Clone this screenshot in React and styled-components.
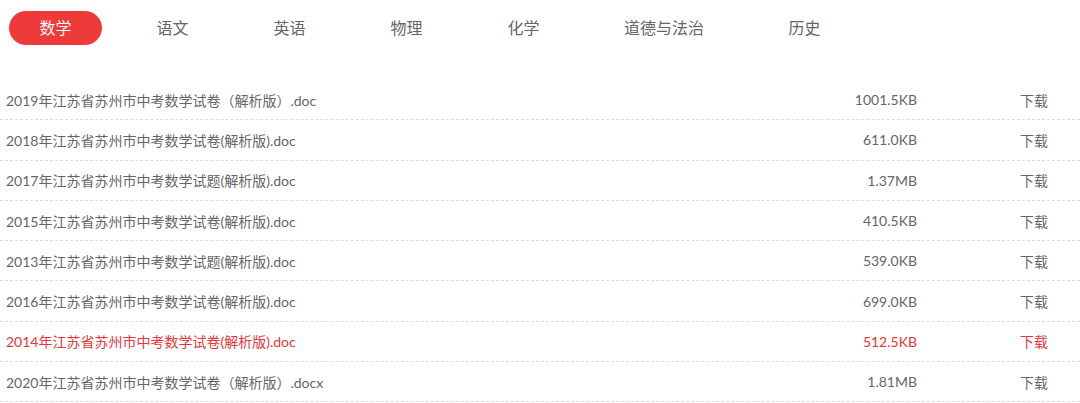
import React from 'react'
import styled, { createGlobalStyle } from 'styled-components'

const GlobalStyle = createGlobalStyle`
  body {
    margin: 0;
    background: #fff;
    font-family: "Lato", "Noto Sans CJK SC", sans-serif;
  }
`

const StyledPage = styled.div`
  width: 1080px;
  overflow: hidden;
`

const StyledTabs = styled.div`
  display: flex;
  gap: 24px;
  padding: 11px 0 0 9px;
  height: 34px;
`

const StyledTab = styled.div`
  height: 34px;
  line-height: 34px;
  padding: 0 30px;
  min-width: 33px;
  text-align: center;
  border-radius: 17px;
  font-size: 16px;
  color: ${p => (p.active ? '#fff' : '#666')};
  background: ${p => (p.active ? '#ef3a3a' : 'transparent')};
`

const StyledList = styled.div`
  margin-top: 35px;
`

const StyledRow = styled.div`
  display: flex;
  align-items: center;
  height: 39.3px;
  border-bottom: 1px dashed #dcdcdc;
  font-size: 14px;
  color: ${p => (p.active ? '#e8363a' : '#666')};
`

const StyledName = styled.div`
  flex: 1;
  padding-left: 6px;
`

const StyledSize = styled.div`
  width: 200px;
  text-align: right;
  margin-right: 103px;
`

const StyledDownload = styled.div`
  width: 31px;
  margin-right: 29px;
`

const tabs = ['数学', '语文', '英语', '物理', '化学', '道德与法治', '历史']

const files = [
  ['2019年江苏省苏州市中考数学试卷（解析版）.doc', '1001.5KB'],
  ['2018年江苏省苏州市中考数学试卷(解析版).doc', '611.0KB'],
  ['2017年江苏省苏州市中考数学试题(解析版).doc', '1.37MB'],
  ['2015年江苏省苏州市中考数学试卷(解析版).doc', '410.5KB'],
  ['2013年江苏省苏州市中考数学试题(解析版).doc', '539.0KB'],
  ['2016年江苏省苏州市中考数学试卷(解析版).doc', '699.0KB'],
  ['2014年江苏省苏州市中考数学试卷(解析版).doc', '512.5KB', true],
  ['2020年江苏省苏州市中考数学试卷（解析版）.docx', '1.81MB']
]

const App = () => (
  <StyledPage>
    <GlobalStyle />
    <StyledTabs>
      {tabs.map((t, i) => (
        <StyledTab key={t} active={i === 0}>
          {t}
        </StyledTab>
      ))}
    </StyledTabs>
    <StyledList>
      {files.map(([name, size, active]) => (
        <StyledRow key={name} active={active}>
          <StyledName>{name}</StyledName>
          <StyledSize>{size}</StyledSize>
          <StyledDownload>下载</StyledDownload>
        </StyledRow>
      ))}
    </StyledList>
  </StyledPage>
)

export default App
